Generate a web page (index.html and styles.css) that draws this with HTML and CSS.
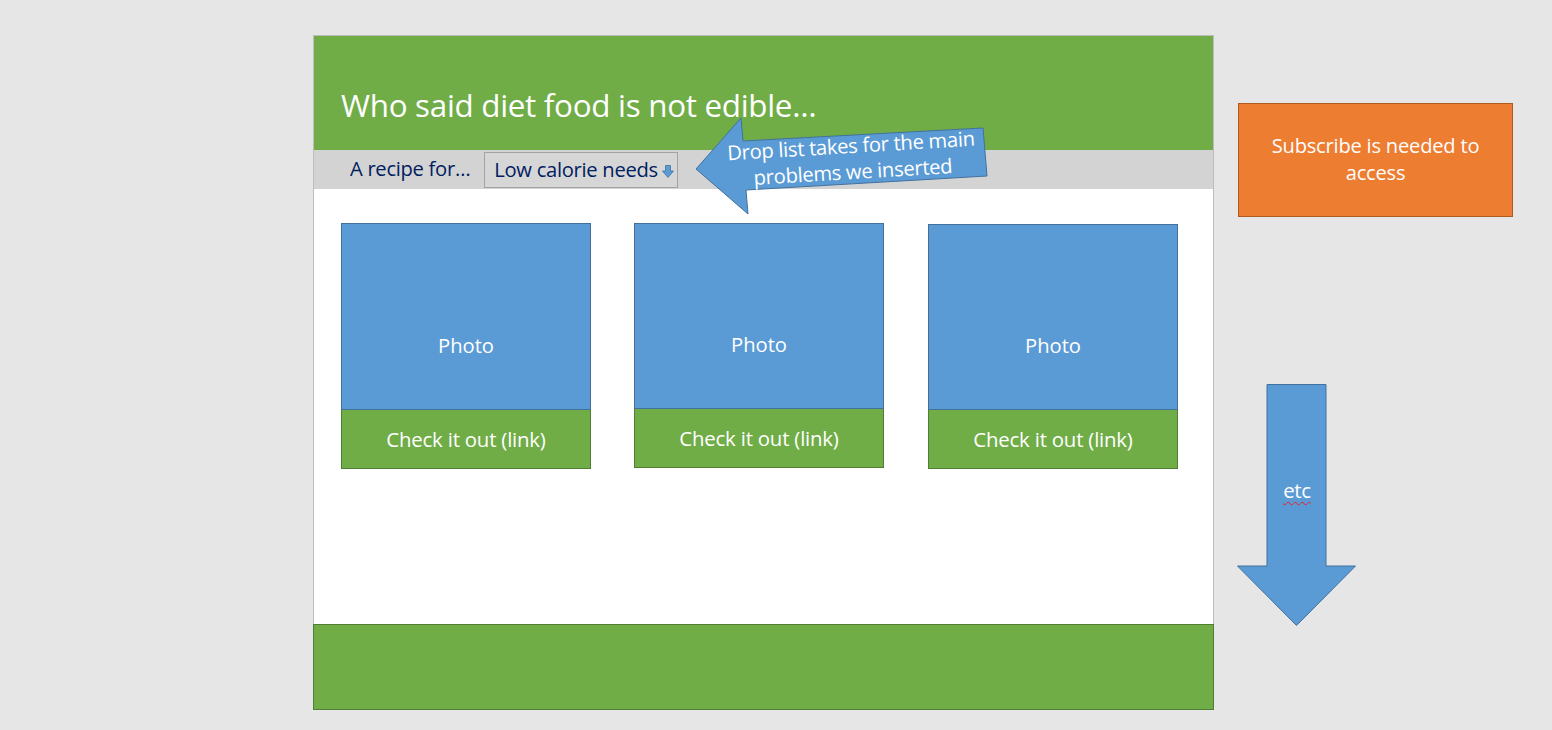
FILE: index.html
```html
<!DOCTYPE html>
<html lang="en">
<head>
<meta charset="utf-8">
<title>Who said diet food is not edible</title>
<link rel="stylesheet" href="styles.css">
</head>
<body>
<div class="slide">
  <div class="frame">
    <header class="header">
      <h1 class="title">Who said diet food is not edible…</h1>
    </header>
    <div class="toolbar">
      <span class="label">A recipe for…</span>
      <div class="select">
        <span>Low calorie needs</span>
        <svg class="select-icon" width="12" height="13" viewBox="0 0 12 13">
          <polygon points="3.5,0.5 8.5,0.5 8.5,6 11.5,6 6,12.5 0.5,6 3.5,6" fill="#5b9bd5" stroke="#41719c" stroke-width="0.8"/>
        </svg>
      </div>
    </div>
    <main class="content">
      <div class="card">
        <div class="photo">Photo</div>
        <div class="link">Check it out (link)</div>
      </div>
      <div class="card card-mid">
        <div class="photo">Photo</div>
        <div class="link">Check it out (link)</div>
      </div>
      <div class="card card-low">
        <div class="photo">Photo</div>
        <div class="link">Check it out (link)</div>
      </div>
    </main>
    <footer class="footer"></footer>
    <svg class="callout" width="300" height="110" viewBox="0 0 300 110">
      <polygon points="2,53 47,2 49,25 289,12 293,60 52,74 54,98" fill="#5b9bd5" stroke="#41719c" stroke-width="1"/>
      <text class="callout-text" x="157" y="37" text-anchor="middle" transform="rotate(-3.4 157 31)">Drop list takes for the main</text>
      <text class="callout-text" x="159" y="63" text-anchor="middle" transform="rotate(-3.4 159 57)">problems we inserted</text>
    </svg>
  </div>
  <aside class="aside">
    <div class="subscribe">Subscribe is needed to<br>access</div>
    <div class="more">
      <svg class="more-arrow" width="120" height="243" viewBox="0 0 120 243">
        <polygon points="30,0.5 89,0.5 89,182 118.5,182 59.5,241.5 0.5,182 30,182" fill="#5b9bd5" stroke="#41719c" stroke-width="1"/>
      </svg>
      <span class="more-text">etc</span>
    </div>
  </aside>
</div>
</body>
</html>
```

FILE: styles.css
```css
html, body {
  margin: 0;
  padding: 0;
}
body {
  background: #e6e6e6;
  font-family: "Open Sans", "Noto Sans", "Liberation Sans", sans-serif;
  width: 1552px;
  height: 730px;
  overflow: hidden;
}
.slide {
  display: flex;
  align-items: flex-start;
  padding: 35px 0 0 313px;
}
.frame {
  position: relative;
  width: 899px;
  border: 1px solid #bdbdbd;
  background: #ffffff;
}
.header {
  height: 114px;
  background: #70ad47;
  display: flex;
  align-items: flex-end;
  padding-left: 27px;
}
.title {
  margin: 0 0 25px 0;
  color: #ffffff;
  font-weight: 400;
  font-size: 31.4px;
  letter-spacing: -0.3px;
  line-height: 40px;
}
.toolbar {
  height: 39px;
  background: #d3d3d3;
  display: flex;
  align-items: center;
  padding-left: 36px;
  gap: 14px;
  color: #002060;
}
.label {
  font-size: 20.2px;
  letter-spacing: -0.3px;
  margin-top: -4px;
}
.select {
  height: 36px;
  margin-top: 1px;
  box-sizing: border-box;
  border: 1px solid #a3a3a3;
  background: #d6d6d6;
  display: flex;
  align-items: center;
  padding: 0 3px 0 9px;
  gap: 4px;
  font-size: 20.2px;
  letter-spacing: -0.3px;
}
.select span {
  margin-top: -2px;
}
.select-icon {
  display: block;
  margin-top: 3px;
}
.content {
  height: 435px;
  box-sizing: border-box;
  padding: 34px 0 0 27px;
  display: flex;
  align-items: flex-start;
  gap: 43px;
}
.card {
  width: 250px;
  display: flex;
  flex-direction: column;
}
.card-mid .photo {
  height: 186px;
}
.card-low {
  margin-top: 1px;
  margin-left: 1px;
}
.card-low .photo {
  height: 186px;
}
.photo {
  height: 187px;
  box-sizing: border-box;
  background: #5b9bd5;
  border: 1px solid #41719c;
  color: #ffffff;
  display: flex;
  align-items: center;
  justify-content: center;
  font-size: 20.2px;
  padding-top: 56px;
}
.link {
  height: 59px;
  box-sizing: border-box;
  background: #70ad47;
  border: 1px solid #507e32;
  border-top: none;
  color: #ffffff;
  display: flex;
  align-items: center;
  justify-content: center;
  font-size: 20.4px;
  letter-spacing: -0.2px;
}
.footer {
  height: 86px;
  box-sizing: border-box;
  background: #70ad47;
  border: 1px solid #507e32;
  margin: 0 -1px -1px -1px;
}
.callout {
  position: absolute;
  left: 380px;
  top: 80px;
  overflow: visible;
}
.callout-text {
  fill: #ffffff;
  font-family: "Open Sans", "Noto Sans", "Liberation Sans", sans-serif;
  font-size: 20.2px;
  letter-spacing: -0.3px;
}
.aside {
  margin-left: 24px;
  display: flex;
  flex-direction: column;
  align-items: flex-start;
}
.subscribe {
  margin-top: 68px;
  width: 275px;
  height: 114px;
  box-sizing: border-box;
  background: #ed7d31;
  border: 1px solid #ae5a21;
  color: #ffffff;
  display: flex;
  align-items: center;
  justify-content: center;
  text-align: center;
  font-size: 20.1px;
  letter-spacing: -0.2px;
  line-height: 27px;
  padding-bottom: 2px;
}
.more {
  position: relative;
  margin-top: 167px;
  margin-left: -1px;
  width: 120px;
  height: 243px;
}
.more-arrow {
  display: block;
}
.more-text {
  position: absolute;
  left: 0;
  right: 0;
  top: 92px;
  text-align: center;
  color: #ffffff;
  font-size: 20.5px;
  letter-spacing: -0.3px;
  line-height: 28px;
  text-decoration: underline wavy #e0252b;
  text-decoration-thickness: 1px;
  text-underline-offset: 3px;
}
```
